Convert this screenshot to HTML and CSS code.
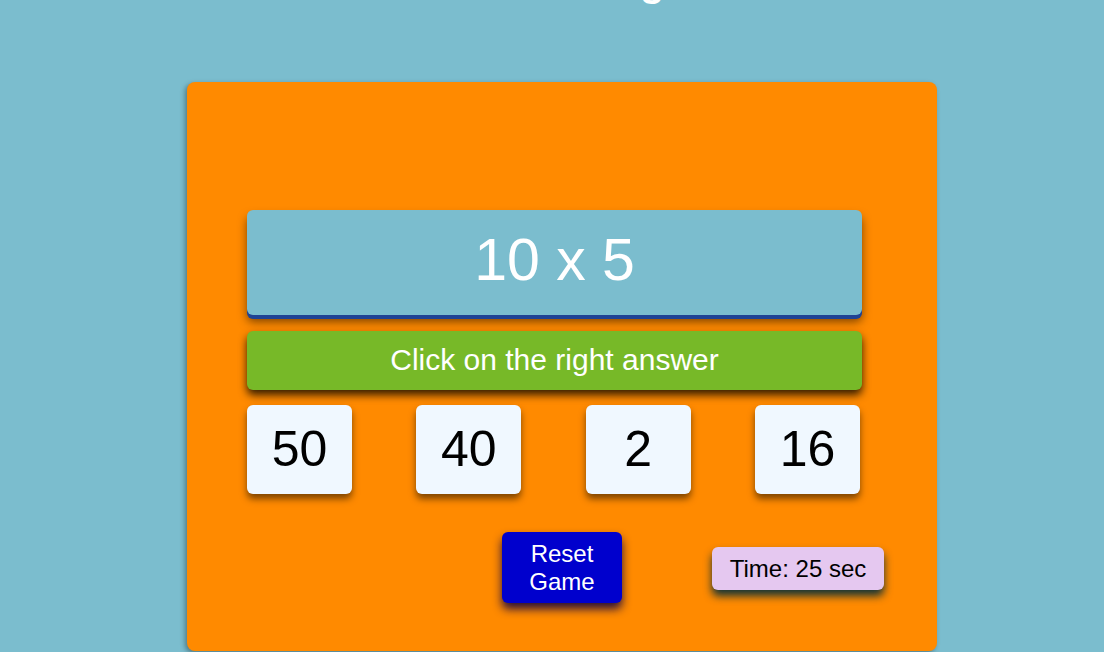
FILE: index.html
```html
<!DOCTYPE html>
<html lang="en">
<head>
<meta charset="utf-8">
<title>Math Challenge</title>
<link rel="stylesheet" href="styles.css">
</head>
<body>
<h1 class="title">Math Challenge</h1>
<div class="card">
  <div class="question">10 x 5</div>
  <div class="instruction">Click on the right answer</div>
  <div class="answers">
    <div class="answer">50</div>
    <div class="answer">40</div>
    <div class="answer">2</div>
    <div class="answer">16</div>
  </div>
  <div class="controls">
    <div class="reset">Reset<br>Game</div>
    <div class="time">Time: 25 sec</div>
  </div>
</div>
</body>
</html>
```

FILE: styles.css
```css
html {
  background: #ffffff;
}
body {
  margin: 0;
  height: 652px;
  background: #7bbdce;
  font-family: "Liberation Sans", Arial, sans-serif;
  overflow: hidden;
}
.title {
  margin: -41px 0 0 0;
  height: 46px;
  line-height: 46px;
  font-size: 40px;
  font-weight: bold;
  color: #ffffff;
  text-align: center;
  padding-right: 26px;
}
.card {
  box-sizing: border-box;
  margin: 77px 0 0 187px;
  width: 750px;
  height: 569px;
  background: #ff8a00;
  border-radius: 8px;
  box-shadow: -2px 2px 5px rgba(0, 0, 0, 0.35);
  padding: 128px 75px 0 60px;
}
.question {
  height: 105px;
  background: #7bbdce;
  border-radius: 6px;
  box-shadow: 0 4px 0 #1f4394, 0 7px 10px rgba(0, 0, 0, 0.5);
  color: #ffffff;
  font-size: 59px;
  line-height: 100px;
  text-align: center;
}
.instruction {
  margin-top: 16px;
  height: 59px;
  background: #77b928;
  border-radius: 6px;
  box-shadow: 0 5px 9px rgba(0, 0, 0, 0.8);
  color: #ffffff;
  font-size: 30px;
  line-height: 57px;
  text-align: center;
}
.answers {
  margin-top: 15px;
  display: flex;
  justify-content: space-between;
  padding-right: 2px;
}
.answer {
  width: 105px;
  height: 89px;
  background: #f0f8ff;
  border-radius: 6px;
  box-shadow: 0 5px 7px rgba(0, 0, 0, 0.5);
  color: #000000;
  font-size: 50px;
  line-height: 89px;
  text-align: center;
}
.controls {
  margin-top: 38px;
  margin-right: -22px;
  display: flex;
  align-items: center;
  padding-left: 255px;
  gap: 90px;
}
.reset {
  width: 120px;
  height: 71px;
  flex-shrink: 0;
  box-sizing: border-box;
  padding-top: 8px;
  background: #0000cd;
  border-radius: 6px;
  box-shadow: 0 6px 10px rgba(30, 10, 60, 0.95);
  color: #ffffff;
  font-size: 24px;
  line-height: 28px;
  text-align: center;
}
.time {
  width: 172px;
  height: 43px;
  flex-shrink: 0;
  margin-top: 2px;
  background: #e5c8f0;
  border-radius: 6px;
  box-shadow: 0 6px 8px #163434;
  color: #000000;
  font-size: 24px;
  line-height: 43px;
  text-align: center;
}
```
